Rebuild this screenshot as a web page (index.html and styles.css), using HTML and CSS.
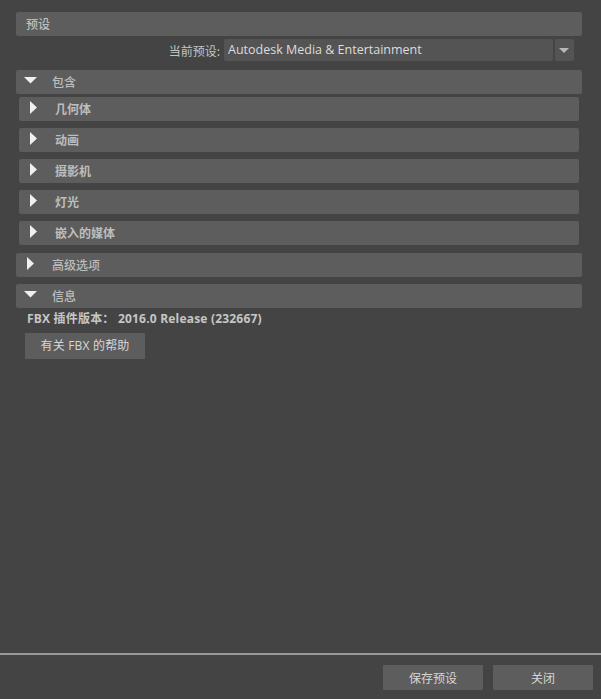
FILE: index.html
```html
<!DOCTYPE html>
<html lang="zh">
<head>
<meta charset="utf-8">
<link rel="stylesheet" href="styles.css">
</head>
<body>
<div class="page">
  <div class="content">
    <div class="bar top plain"><span class="title">预设</span></div>
    <div class="preset-row">
      <span class="preset-label">当前预设:</span>
      <div class="combo">Autodesk Media &amp; Entertainment</div>
      <div class="combo-btn"><svg width="19" height="22" viewBox="0 0 19 22"><polygon points="4,9 14,9 9,14" fill="#b8b8b8"/></svg></div>
    </div>

    <div class="bar top open-gap">
      <svg class="tri" width="28" height="24" viewBox="0 0 28 24"><polygon points="0,7 13,7 6.5,13.5" fill="#f0f0f0"/></svg>
      <span class="title">包含</span>
    </div>
    <div class="sub-list">
      <div class="bar sub"><svg class="tri" width="28" height="24" viewBox="0 0 28 24"><polygon points="3,4 10,10.5 3,17" fill="#f0f0f0"/></svg><span class="title bold">几何体</span></div>
      <div class="bar sub"><svg class="tri" width="28" height="24" viewBox="0 0 28 24"><polygon points="3,4 10,10.5 3,17" fill="#f0f0f0"/></svg><span class="title bold">动画</span></div>
      <div class="bar sub"><svg class="tri" width="28" height="24" viewBox="0 0 28 24"><polygon points="3,4 10,10.5 3,17" fill="#f0f0f0"/></svg><span class="title bold">摄影机</span></div>
      <div class="bar sub"><svg class="tri" width="28" height="24" viewBox="0 0 28 24"><polygon points="3,4 10,10.5 3,17" fill="#f0f0f0"/></svg><span class="title bold">灯光</span></div>
      <div class="bar sub"><svg class="tri" width="28" height="24" viewBox="0 0 28 24"><polygon points="3,4 10,10.5 3,17" fill="#f0f0f0"/></svg><span class="title bold">嵌入的媒体</span></div>
    </div>

    <div class="bar top adv">
      <svg class="tri" width="28" height="24" viewBox="0 0 28 24"><polygon points="3,4 10,10.5 3,17" fill="#f0f0f0"/></svg>
      <span class="title">高级选项</span>
    </div>
    <div class="bar top info">
      <svg class="tri" width="28" height="24" viewBox="0 0 28 24"><polygon points="0,7 13,7 6.5,13.5" fill="#f0f0f0"/></svg>
      <span class="title">信息</span>
    </div>
    <div class="version">FBX 插件版本： 2016.0 Release (232667)</div>
    <div class="help-btn">有关 FBX 的帮助</div>
  </div>
  <div class="footer">
    <div class="btn">保存预设</div>
    <div class="btn">关闭</div>
  </div>
</div>
</body>
</html>
```
FILE: styles.css
```css
* { box-sizing: border-box; }
html, body {
  margin: 0;
  padding: 0;
  background: #444444;
}
body {
  font-family: "Noto Sans CJK SC", "Noto Sans", sans-serif;
  font-size: 12px;
  color: #bdbdbd;
}
.page {
  height: 699px;
  display: flex;
  flex-direction: column;
}
.content {
  flex: 1;
  padding: 12px 19px 0 16px;
}
.bar {
  height: 24px;
  background: #5d5d5d;
  border-radius: 2px;
  display: flex;
  align-items: center;
}
.bar .tri {
  margin-left: 8px;
  flex: none;
}
.bar.plain .title {
  margin-left: 10px;
}
.title {
  line-height: 24px;
  color: #bdbdbd;
  font-weight: 500;
}
.title.bold {
  font-weight: 700;
}
.preset-row {
  display: flex;
  align-items: center;
  justify-content: flex-end;
  height: 22px;
  margin-top: 3px;
  padding-right: 8px;
}
.preset-label {
  color: #c4c4c4;
  margin-right: 4px;
}
.combo {
  width: 329px;
  height: 22px;
  background: #545454;
  border-radius: 2px;
  padding-left: 4px;
  line-height: 22px;
  font-family: "Open Sans", "Noto Sans CJK SC", sans-serif;
  font-size: 12.5px;
  color: #dcdcdc;
}
.combo-btn {
  width: 19px;
  height: 22px;
  margin-left: 2px;
  background: #545454;
  border-radius: 2px;
  display: flex;
}
.open-gap {
  margin-top: 9px;
}
.sub-list {
  display: flex;
  flex-direction: column;
  gap: 7px;
  margin: 3px 3px 0 3px;
}
.adv {
  margin-top: 8px;
}
.info {
  margin-top: 7px;
}
.version {
  margin: 1px 0 0 11px;
  line-height: 20px;
  font-weight: 700;
  letter-spacing: 0.2px;
  color: #c6c6c6;
  font-family: "Open Sans", "Noto Sans CJK SC", sans-serif;
}
.help-btn {
  width: 120px;
  height: 26px;
  margin: 4px 0 0 9px;
  background: #5d5d5d;
  line-height: 26px;
  text-align: center;
  color: #d6d6d6;
  letter-spacing: 0.2px;
  font-family: "Open Sans", "Noto Sans CJK SC", sans-serif;
}
.footer {
  border-top: 2px solid #9a9a9a;
  height: 46px;
  padding: 10px 8px 9px 0;
  display: flex;
  justify-content: flex-end;
  gap: 10px;
}
.btn {
  width: 100px;
  height: 25px;
  background: #5d5d5d;
  border-radius: 1px;
  line-height: 25px;
  text-align: center;
  color: #d6d6d6;
}
```
